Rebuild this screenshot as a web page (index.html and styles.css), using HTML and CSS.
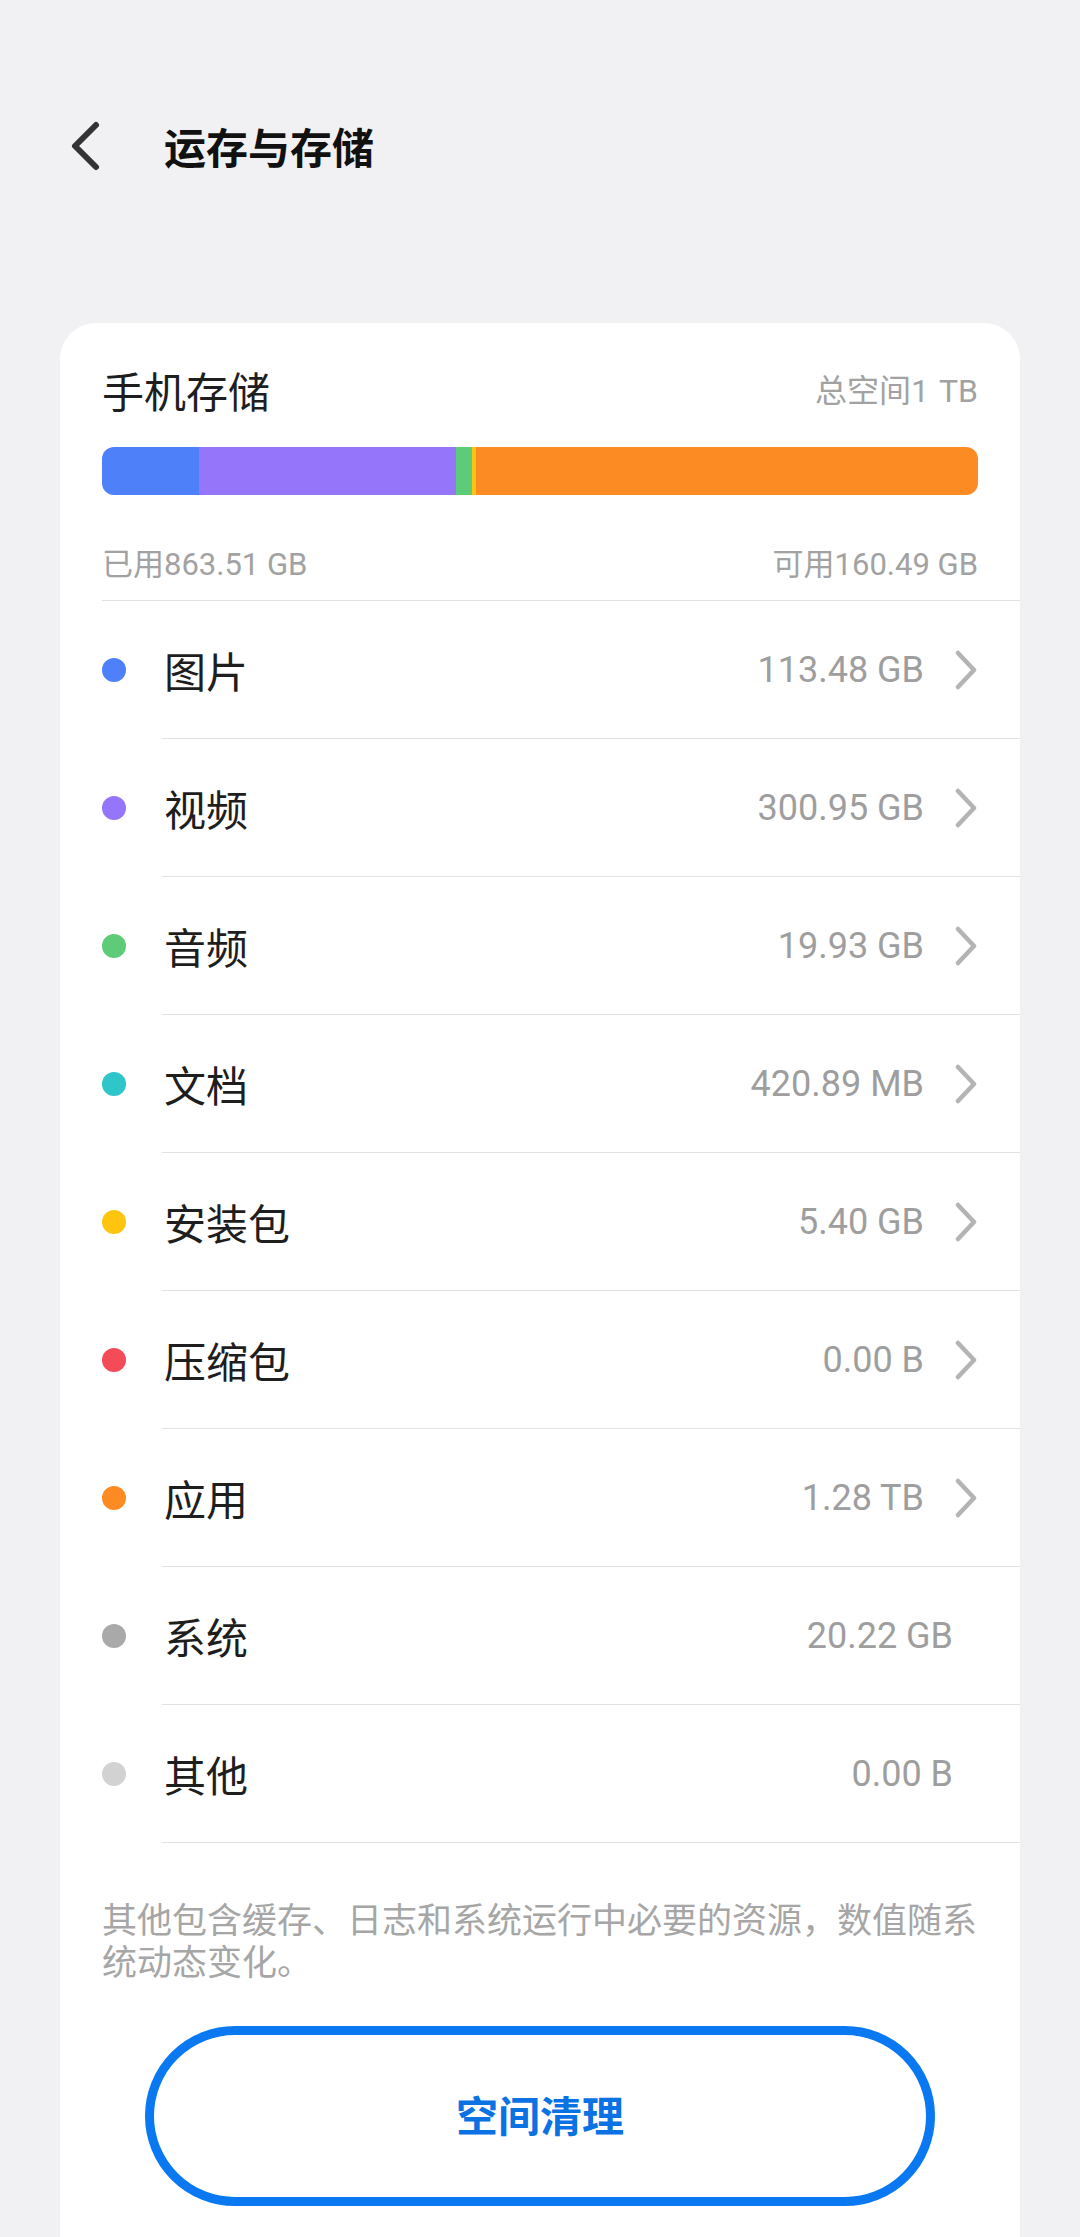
FILE: index.html
```html
<!DOCTYPE html>
<html lang="zh-CN">
<head>
    <meta charset="UTF-8">
    <meta name="viewport" content="width=device-width, initial-scale=1.0">
    <title>运存与存储</title>
    <link rel="stylesheet" href="styles.css">
</head>
<body>
    <header class="top-bar">
        <svg class="back" viewBox="0 0 36 52" width="36" height="52">
            <polyline points="28,5 7,26 28,47" />
        </svg>
        <h1>运存与存储</h1>
    </header>

    <div class="card">
        <div class="summary">
            <div class="summary-head">
                <h2>手机存储</h2>
                <span class="total">总空间1 TB</span>
            </div>
            <div class="bar">
                <span class="seg blue" style="width: 97px"></span>
                <span class="seg purple" style="width: 257px"></span>
                <span class="seg green" style="width: 16px"></span>
                <span class="seg yellow" style="width: 4px"></span>
                <span class="seg orange" style="flex: 1"></span>
            </div>
            <div class="summary-foot">
                <span>已用863.51 GB</span>
                <span>可用160.49 GB</span>
            </div>
        </div>

        <ul class="list">
            <li class="row">
                <span class="dot blue"></span>
                <div class="row-body">
                    <span class="label">图片</span>
                    <span class="value">113.48 GB</span>
                    <svg class="arrow" viewBox="0 0 24 40" width="24" height="40"><polyline points="4,3 20,20 4,37" /></svg>
                </div>
            </li>
            <li class="row">
                <span class="dot purple"></span>
                <div class="row-body">
                    <span class="label">视频</span>
                    <span class="value">300.95 GB</span>
                    <svg class="arrow" viewBox="0 0 24 40" width="24" height="40"><polyline points="4,3 20,20 4,37" /></svg>
                </div>
            </li>
            <li class="row">
                <span class="dot green"></span>
                <div class="row-body">
                    <span class="label">音频</span>
                    <span class="value">19.93 GB</span>
                    <svg class="arrow" viewBox="0 0 24 40" width="24" height="40"><polyline points="4,3 20,20 4,37" /></svg>
                </div>
            </li>
            <li class="row">
                <span class="dot teal"></span>
                <div class="row-body">
                    <span class="label">文档</span>
                    <span class="value">420.89 MB</span>
                    <svg class="arrow" viewBox="0 0 24 40" width="24" height="40"><polyline points="4,3 20,20 4,37" /></svg>
                </div>
            </li>
            <li class="row">
                <span class="dot yellow"></span>
                <div class="row-body">
                    <span class="label">安装包</span>
                    <span class="value">5.40 GB</span>
                    <svg class="arrow" viewBox="0 0 24 40" width="24" height="40"><polyline points="4,3 20,20 4,37" /></svg>
                </div>
            </li>
            <li class="row">
                <span class="dot red"></span>
                <div class="row-body">
                    <span class="label">压缩包</span>
                    <span class="value">0.00 B</span>
                    <svg class="arrow" viewBox="0 0 24 40" width="24" height="40"><polyline points="4,3 20,20 4,37" /></svg>
                </div>
            </li>
            <li class="row">
                <span class="dot orange"></span>
                <div class="row-body">
                    <span class="label">应用</span>
                    <span class="value">1.28 TB</span>
                    <svg class="arrow" viewBox="0 0 24 40" width="24" height="40"><polyline points="4,3 20,20 4,37" /></svg>
                </div>
            </li>
            <li class="row">
                <span class="dot gray"></span>
                <div class="row-body plain">
                    <span class="label">系统</span>
                    <span class="value">20.22 GB</span>
                </div>
            </li>
            <li class="row">
                <span class="dot light"></span>
                <div class="row-body plain">
                    <span class="label">其他</span>
                    <span class="value">0.00 B</span>
                </div>
            </li>
        </ul>

        <p class="note">其他包含缓存、日志和系统运行中必要的资源，数值随系统动态变化。</p>

        <button class="clean-btn">空间清理</button>
    </div>
</body>
</html>
```

FILE: styles.css
```css
body {
    margin: 0;
    background: #f1f1f3;
    font-family: Roboto, "Noto Sans CJK SC", sans-serif;
    color: #222222;
    overflow: hidden;
}

/* top bar */
.top-bar {
    display: flex;
    align-items: center;
    gap: 60px;
    padding: 120px 0 0 68px;
    height: 52px;
}

.back {
    display: block;
    fill: none;
    stroke: #333333;
    stroke-width: 6;
    stroke-linecap: round;
    stroke-linejoin: round;
}

.top-bar h1 {
    margin: 0;
    font-family: "Noto Sans CJK SC", sans-serif;
    font-size: 42px;
    line-height: 52px;
    font-weight: 700;
    color: #111111;
}

/* card */
.card {
    margin: 151px 60px 0;
    padding: 41px 0 80px 42px;
    background: #ffffff;
    border-radius: 36px;
}

.summary {
    padding-right: 42px;
    padding-bottom: 15px;
    border-bottom: 1px solid #e2e2e2;
}

.summary-head {
    display: flex;
    justify-content: space-between;
    align-items: center;
    height: 52px;
}

.summary-head h2 {
    margin: 0;
    font-family: "Noto Sans CJK SC", sans-serif;
    font-size: 42px;
    font-weight: 400;
    line-height: 52px;
    color: #1e1e1e;
}

.total {
    font-size: 32px;
    color: #a2a2a2;
    margin-top: -4px;
    word-spacing: 2px;
}

.bar {
    display: flex;
    height: 48px;
    margin-top: 31px;
    border-radius: 12px;
    overflow: hidden;
}

.seg {
    display: block;
    height: 100%;
}

.summary-foot {
    display: flex;
    justify-content: space-between;
    margin-top: 50px;
    font-size: 31px;
    line-height: 40px;
    color: #a2a2a2;
}

/* colours shared by bar and dots */
.blue { background: #4d80f9; }
.purple { background: #9575f9; }
.green { background: #5ecb78; }
.teal { background: #2ec6c9; }
.yellow { background: #ffc40d; }
.red { background: #f34b58; }
.orange { background: #fd8b24; }
.gray { background: #a9a9a9; }
.light { background: #d2d2d2; }

/* list */
.list {
    list-style: none;
    margin: 0;
    padding: 0;
}

.row {
    display: flex;
    align-items: center;
}

.dot {
    width: 24px;
    height: 24px;
    border-radius: 50%;
    flex-shrink: 0;
}

.row-body {
    flex: 1;
    display: flex;
    align-items: center;
    height: 137px;
    margin-left: 36px;
    padding-right: 42px;
    border-bottom: 1px solid #e2e2e2;
}

.row-body.plain {
    padding-right: 67px;
}

.label {
    flex: 1;
    font-family: "Noto Sans CJK SC", sans-serif;
    font-size: 42px;
    padding-left: 2px;
    color: #1e1e1e;
}

.value {
    font-size: 36px;
    color: #9e9e9e;
}

.arrow {
    display: block;
    margin-left: 30px;
    fill: none;
    stroke: #b4b4b4;
    stroke-width: 4.5;
    stroke-linecap: round;
    stroke-linejoin: round;
}

.note {
    margin: 54px 42px 0 0;
    font-family: "Noto Sans CJK SC", sans-serif;
    font-size: 35px;
    line-height: 42px;
    color: #a6a6a6;
}

.clean-btn {
    display: block;
    width: 790px;
    height: 180px;
    margin: 45px 0 0 43px;
    padding: 0 0 6px;
    background: #ffffff;
    border: 9px solid #0a78f0;
    border-radius: 90px;
    font-family: "Noto Sans CJK SC", sans-serif;
    font-size: 42px;
    font-weight: 700;
    color: #0a72e2;
}
```
